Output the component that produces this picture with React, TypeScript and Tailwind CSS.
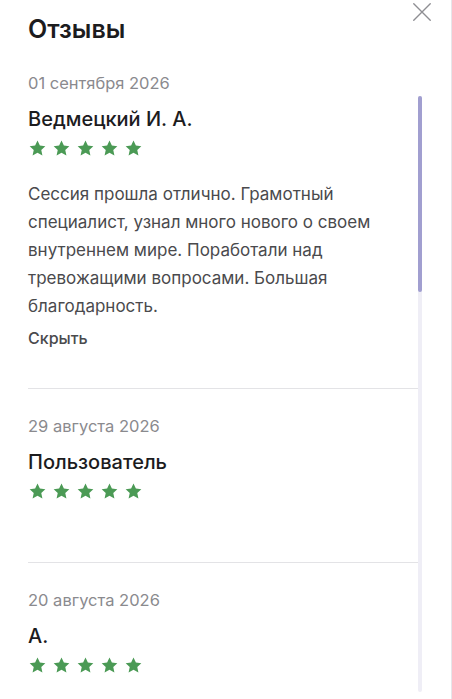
const reviews = [
  {
    date: "01 сентября 2026",
    name: "Ведмецкий И. А.",
    text: "Сессия прошла отлично. Грамотный специалист, узнал много нового о своем внутреннем мире. Поработали над тревожащими вопросами. Большая благодарность.",
  },
  { date: "29 августа 2026", name: "Пользователь", text: "" },
  { date: "20 августа 2026", name: "А.", text: "" },
];

function Star() {
  return (
    <svg viewBox="0 0 24 24" className="h-[19px] w-[19px]" fill="#4b9a55">
      <path d="M12 2l3 6.3 6.9.8-5.15 4.75 1.45 6.85L12 17.3l-6.2 3.4 1.45-6.85L2.1 9.1 9 8.3z" />
    </svg>
  );
}

function Stars() {
  return (
    <div className="flex gap-[5px]">
      {[0, 1, 2, 3, 4].map((i) => (
        <Star key={i} />
      ))}
    </div>
  );
}

export default function App() {
  return (
    <div
      className="relative h-[699px] w-[452px] overflow-hidden border-r border-[#e6e6ea] bg-white"
      style={{ fontFamily: "Inter, 'Noto Sans', sans-serif" }}
    >
      <button className="absolute right-[18px] top-[1px] text-[#8e8e93]">
        <svg viewBox="0 0 24 24" className="h-[22px] w-[22px]" fill="none" stroke="currentColor" strokeWidth="1.5" strokeLinecap="round">
          <path d="M3 3l18 18M21 3L3 21" />
        </svg>
      </button>

      <h1 className="pl-[28px] pt-[13px] text-[25px] font-semibold leading-[32px] text-[#1c1c1e]">
        Отзывы
      </h1>

      <div className="mt-[28px] flex">
        <div className="w-[418px] shrink-0 pl-[28px]">
          {reviews.map((r, idx) => (
            <div key={r.date} className={idx > 0 ? "border-t border-[#e3e3e6] pt-[27px]" : ""}>
              <div className="text-[16.5px] leading-[20px] text-[#8a8a8e]">{r.date}</div>
              <div className="mt-[13px] text-[20px] font-medium leading-[26px] text-[#1c1c1e]">{r.name}</div>
              <div className="mt-[7px]">
                <Stars />
              </div>
              {r.text ? (
                <>
                  <p className="mt-[22px] pr-[40px] text-[17px] leading-[28px] text-[#4a4a4d]">{r.text}</p>
                  <div className="mt-[8px] text-[16px] font-medium leading-[20px] text-[#4a4a4d]">Скрыть</div>
                  <div className="h-[40px]" />
                </>
              ) : (
                <div className="h-[61px]" />
              )}
            </div>
          ))}
        </div>
        <div className="mt-[23px] h-[596px] w-[4px] shrink-0 rounded-full bg-[#efeef6]">
          <div className="h-[196px] w-[4px] rounded-full bg-[#a19fd0]" />
        </div>
      </div>
    </div>
  );
}
